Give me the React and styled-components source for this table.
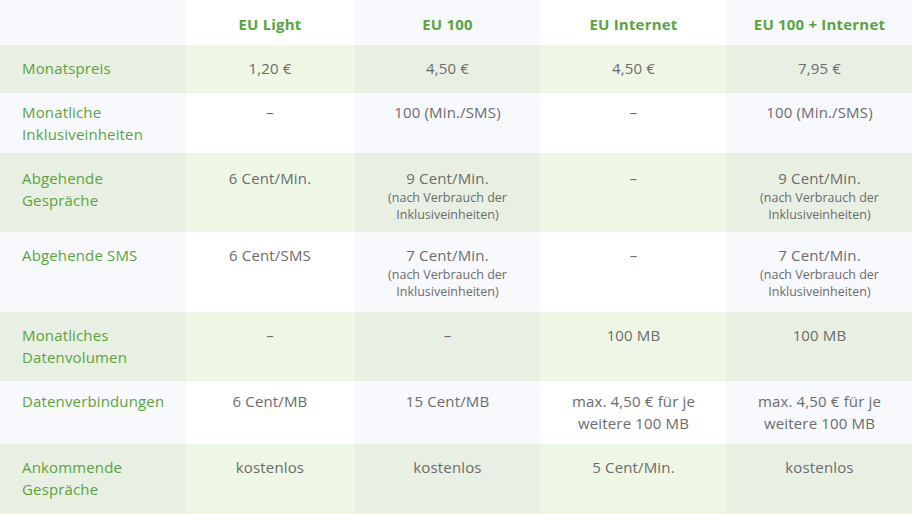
import styled, { createGlobalStyle } from 'styled-components'

const GlobalStyle = createGlobalStyle`
  body {
    margin: 0;
    background: #ffffff;
    font-family: 'Open Sans', 'Liberation Sans', sans-serif;
  }
`

const Table = styled.div`
  display: grid;
  grid-template-columns: 185px 170px 185px 187px 185px;
  grid-template-rows: 45px 48px 60px 79px 80px 69px 63px 70px;
  width: 912px;
  height: 514px;
  overflow: hidden;
`

const bg = ({ $green, $tint }) => {
  if ($green) return $tint ? '#e8f0e3' : '#eef6e4'
  return $tint ? '#f7f9fd' : '#ffffff'
}

const Cell = styled.div`
  background: ${bg};
  padding: ${(p) => p.$pad}px 8px 0;
  color: #6c6c6c;
  font-size: 15px;
  line-height: 22px;
  text-align: center;
  letter-spacing: 0.15px;
`

const LabelCell = styled(Cell)`
  color: #5ba43d;
  text-align: left;
  padding-left: 22px;
`

const HeadCell = styled(Cell)`
  color: #5ba43d;
  font-weight: 700;
  letter-spacing: 0.2px;
  display: flex;
  align-items: center;
  justify-content: center;
  padding: 2px 0 0;
`

const Note = styled.div`
  font-size: 12.5px;
  line-height: 17px;
  letter-spacing: 0;
`

const plans = ['EU Light', 'EU 100', 'EU Internet', 'EU 100 + Internet']

const note = (
  <Note>
    (nach Verbrauch der
    <br />
    Inklusiveinheiten)
  </Note>
)

const rows = [
  { label: 'Monatspreis', pad: 12, values: ['1,20 €', '4,50 €', '4,50 €', '7,95 €'] },
  {
    label: (
      <>
        Monatliche
        <br />
        Inklusiveinheiten
      </>
    ),
    pad: 8,
    values: ['–', '100 (Min./SMS)', '–', '100 (Min./SMS)'],
  },
  {
    label: (
      <>
        Abgehende
        <br />
        Gespräche
      </>
    ),
    pad: 14,
    values: [
      '6 Cent/Min.',
      <>9 Cent/Min.{note}</>,
      '–',
      <>9 Cent/Min.{note}</>,
    ],
  },
  {
    label: 'Abgehende SMS',
    pad: 12,
    values: [
      '6 Cent/SMS',
      <>7 Cent/Min.{note}</>,
      '–',
      <>7 Cent/Min.{note}</>,
    ],
  },
  {
    label: (
      <>
        Monatliches
        <br />
        Datenvolumen
      </>
    ),
    pad: 12,
    values: ['–', '–', '100 MB', '100 MB'],
  },
  {
    label: 'Datenverbindungen',
    pad: 9,
    values: [
      '6 Cent/MB',
      '15 Cent/MB',
      <>
        max. 4,50 € für je
        <br />
        weitere 100 MB
      </>,
      <>
        max. 4,50 € für je
        <br />
        weitere 100 MB
      </>,
    ],
  },
  {
    label: (
      <>
        Ankommende
        <br />
        Gespräche
      </>
    ),
    pad: 12,
    values: ['kostenlos', 'kostenlos', '5 Cent/Min.', 'kostenlos'],
  },
]

export default function App() {
  return (
    <>
      <GlobalStyle />
      <Table>
        <HeadCell $tint />
        {plans.map((p, i) => (
          <HeadCell key={p} $tint={i % 2 === 1}>
            {p}
          </HeadCell>
        ))}
        {rows.map((row, r) => {
          const green = r % 2 === 0
          return [
            <LabelCell key={`l${r}`} $green={green} $tint $pad={row.pad}>
              {row.label}
            </LabelCell>,
            ...row.values.map((v, i) => (
              <Cell key={`${r}-${i}`} $green={green} $tint={i % 2 === 1} $pad={row.pad}>
                {v}
              </Cell>
            )),
          ]
        })}
      </Table>
    </>
  )
}
